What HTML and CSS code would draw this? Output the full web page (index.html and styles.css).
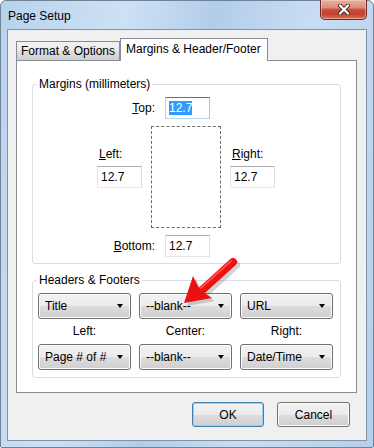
FILE: index.html
```html
<!DOCTYPE html>
<html lang="en">
<head>
  <meta charset="UTF-8">
  <title>Page Setup</title>
  <link rel="stylesheet" href="styles.css">
</head>
<body>

  <div class="window">
    <div class="titlebar">
      <span class="title">Page Setup</span>
      <button class="close" aria-label="Close">
        <svg width="12" height="11" viewBox="0 0 12 11">
          <path d="M2 1.5 L10 9.5 M10 1.5 L2 9.5" stroke="#4a2a26" stroke-width="4" stroke-linecap="round"/>
          <path d="M2 1.5 L10 9.5 M10 1.5 L2 9.5" stroke="#fff" stroke-width="2.2" stroke-linecap="round"/>
        </svg>
      </button>
    </div>

    <div class="client">
      <div class="tabs">
        <div class="tab">Format &amp; Options</div>
        <div class="tab active">Margins &amp; Header/Footer</div>
      </div>

      <div class="panel">
        <fieldset class="group margins">
          <legend>Margins (millimeters)</legend>

          <div class="row-inline">
            <label class="label-right"><u>T</u>op:</label>
            <div class="field focus"><span class="selected">12.7</span></div>
          </div>

          <div class="row-mid">
            <div class="side">
              <label><u>L</u>eft:</label>
              <div class="field">12.7</div>
            </div>
            <div class="page"></div>
            <div class="side">
              <label><u>R</u>ight:</label>
              <div class="field">12.7</div>
            </div>
          </div>

          <div class="row-inline">
            <label class="label-right"><u>B</u>ottom:</label>
            <div class="field">12.7</div>
          </div>
        </fieldset>

        <fieldset class="group headers">
          <legend>Headers &amp; Footers</legend>
          <div class="hf-grid">
            <div class="select">Title<span class="caret"></span></div>
            <div class="select">--blank--<span class="caret"></span></div>
            <div class="select">URL<span class="caret"></span></div>

            <div class="hf-label">Left:</div>
            <div class="hf-label">Center:</div>
            <div class="hf-label">Right:</div>

            <div class="select">Page # of #<span class="caret"></span></div>
            <div class="select">--blank--<span class="caret"></span></div>
            <div class="select">Date/Time<span class="caret"></span></div>
          </div>
        </fieldset>
      </div>

      <div class="actions">
        <button class="btn default">OK</button>
        <button class="btn">Cancel</button>
      </div>
    </div>

    <!-- red call-out arrow drawn over the dialog -->
    <svg class="callout" width="374" height="448" viewBox="0 0 374 448">
      <defs>
        <linearGradient id="redTube" x1="0" y1="0" x2="1" y2="1">
          <stop offset="0" stop-color="#ff4a4a"/>
          <stop offset="0.5" stop-color="#f01212"/>
          <stop offset="1" stop-color="#c80000"/>
        </linearGradient>
      </defs>
      <g opacity="0.25" transform="translate(3 3)">
        <line x1="233" y1="262" x2="200" y2="292" stroke="#555" stroke-width="8" stroke-linecap="round"/>
        <path d="M184 303 L193 276 L200 290 L212 298 Z" fill="#555"/>
      </g>
      <line x1="233" y1="262" x2="200" y2="292" stroke="url(#redTube)" stroke-width="8" stroke-linecap="round"/>
      <path d="M184 303 L193 276 L200 290 L212 298 Z" fill="#ee1010"/>
      <line x1="231" y1="261" x2="201" y2="288" stroke="#ff7a7a" stroke-width="1.5" stroke-linecap="round" opacity="0.7"/>
    </svg>
  </div>

</body>
</html>
```

FILE: styles.css
```css
* {
  box-sizing: border-box;
}

body {
  margin: 0;
  background: #ffffff;
  font-family: 'Liberation Sans', Arial, sans-serif;
  font-size: 12px;
  color: #000;
}

.window {
  position: relative;
  width: 374px;
  height: 448px;
  padding: 0 6px 6px 6px;
  border: 1px solid #6f8296;
  border-radius: 6px 6px 2px 2px;
  background: linear-gradient(100deg, #b9d2ec 0%, #cde1f5 28%, #b2cdea 48%, #c8ddf3 70%, #b6cfea 100%);
}

.titlebar {
  height: 28px;
  display: flex;
  justify-content: space-between;
  align-items: flex-start;
}

.title {
  padding: 7px 0 0 1px;
  line-height: 16px;
}

.close {
  margin-top: -1px;
  width: 47px;
  height: 20px;
  padding: 0;
  display: flex;
  justify-content: center;
  align-items: center;
  border: 1px solid #6b2c25;
  border-top: none;
  border-radius: 0 0 5px 5px;
  background: linear-gradient(#eab0a2 0%, #d98d7c 40%, #c84b36 52%, #c5432f 75%, #d8745c 100%);
  box-shadow: inset 0 0 0 1px rgba(255, 220, 210, 0.45);
}

.client {
  width: 360px;
  height: 412px;
  padding: 8px 9px 0 8px;
  border: 1px solid #8393a6;
  background: #f0f0f0;
}

/* tabs */

.tabs {
  display: flex;
  align-items: flex-end;
  height: 22px;
  position: relative;
  z-index: 1;
}

.tab {
  width: 104px;
  height: 19px;
  padding-left: 4px;
  line-height: 18px;
  border: 1px solid #898c95;
  border-bottom: none;
  background: linear-gradient(#f2f2f2 0%, #ebebeb 45%, #dddddd 55%, #cfcfcf 100%);
}

.tab.active {
  width: 148px;
  height: 23px;
  margin-bottom: -1px;
  padding-left: 5px;
  line-height: 20px;
  background: #fff;
}

/* white page */

.panel {
  width: 341px;
  height: 333px;
  padding: 15px 15px 0 15px;
  border: 1px solid #898c95;
  background: #fff;
}

.group {
  margin: 0;
  padding: 0;
  min-width: 0;
  border: 1px solid #d5dfe5;
  border-radius: 3px;
}

.group legend {
  margin-left: 4px;
  padding: 0 2px;
  line-height: 16px;
}

.headers {
  margin-top: 8px;
}

/* margins */

.row-inline {
  display: flex;
  align-items: center;
  margin-top: 5px;
  padding-left: 72px;
}

.row-inline:last-child {
  margin-top: 7px;
  margin-bottom: 6px;
}

.label-right {
  width: 50px;
  margin-right: 10px;
  text-align: right;
}

.field {
  width: 45px;
  height: 22px;
  padding-left: 3px;
  line-height: 20px;
  border: 1px solid;
  border-color: #abadb3 #dbdfe6 #e3e9ef #e2e3ea;
  background: #fff;
}

.field.focus {
  border-color: #3d7bad #a4c9e3 #b7d9ed #b5cfe7;
}

.selected {
  background: #3399ff;
  color: #fff;
}

.row-mid {
  display: flex;
  gap: 9px;
  margin-top: 7px;
  padding-left: 64px;
}

.side {
  display: flex;
  flex-direction: column;
  gap: 4px;
  width: 45px;
  margin-top: 20px;
}

.side label {
  padding-left: 2px;
  line-height: 16px;
}

.page {
  width: 70px;
  height: 102px;
  border: 1px dashed #6a6a6a;
}

/* headers & footers */

.hf-grid {
  display: grid;
  grid-template-columns: repeat(3, 93px);
  grid-template-rows: 26px 25px 26px;
  column-gap: 8px;
  margin: 5px 0 7px 0;
  padding-left: 5px;
}

.select {
  display: flex;
  justify-content: space-between;
  align-items: center;
  padding: 0 7px 0 6px;
  border: 1px solid #707070;
  border-radius: 3px;
  background: linear-gradient(#f2f2f2 0%, #ebebeb 50%, #dddddd 50%, #cfcfcf 100%);
  box-shadow: inset 0 0 0 1px #fcfcfc;
}

.caret {
  width: 0;
  height: 0;
  border-left: 3.5px solid transparent;
  border-right: 3.5px solid transparent;
  border-top: 4px solid #000;
}

.hf-label {
  text-align: center;
  line-height: 25px;
}

/* buttons */

.actions {
  display: flex;
  justify-content: flex-end;
  gap: 13px;
  margin-top: 9px;
  padding-right: 7px;
}

.btn {
  width: 73px;
  height: 25px;
  padding: 0;
  font-family: inherit;
  font-size: 12px;
  color: #000;
  border: 1px solid #707070;
  border-radius: 3px;
  background: linear-gradient(#f2f2f2 0%, #ebebeb 50%, #dddddd 50%, #cfcfcf 100%);
  box-shadow: inset 0 0 0 1px #fcfcfc;
}

.btn.default {
  width: 72px;
  border-color: #3c7fb1;
  box-shadow: inset 0 0 0 1px #8fd4f6;
}

.callout {
  position: absolute;
  top: -1px;
  left: -1px;
  pointer-events: none;
  z-index: 2;
}
```
